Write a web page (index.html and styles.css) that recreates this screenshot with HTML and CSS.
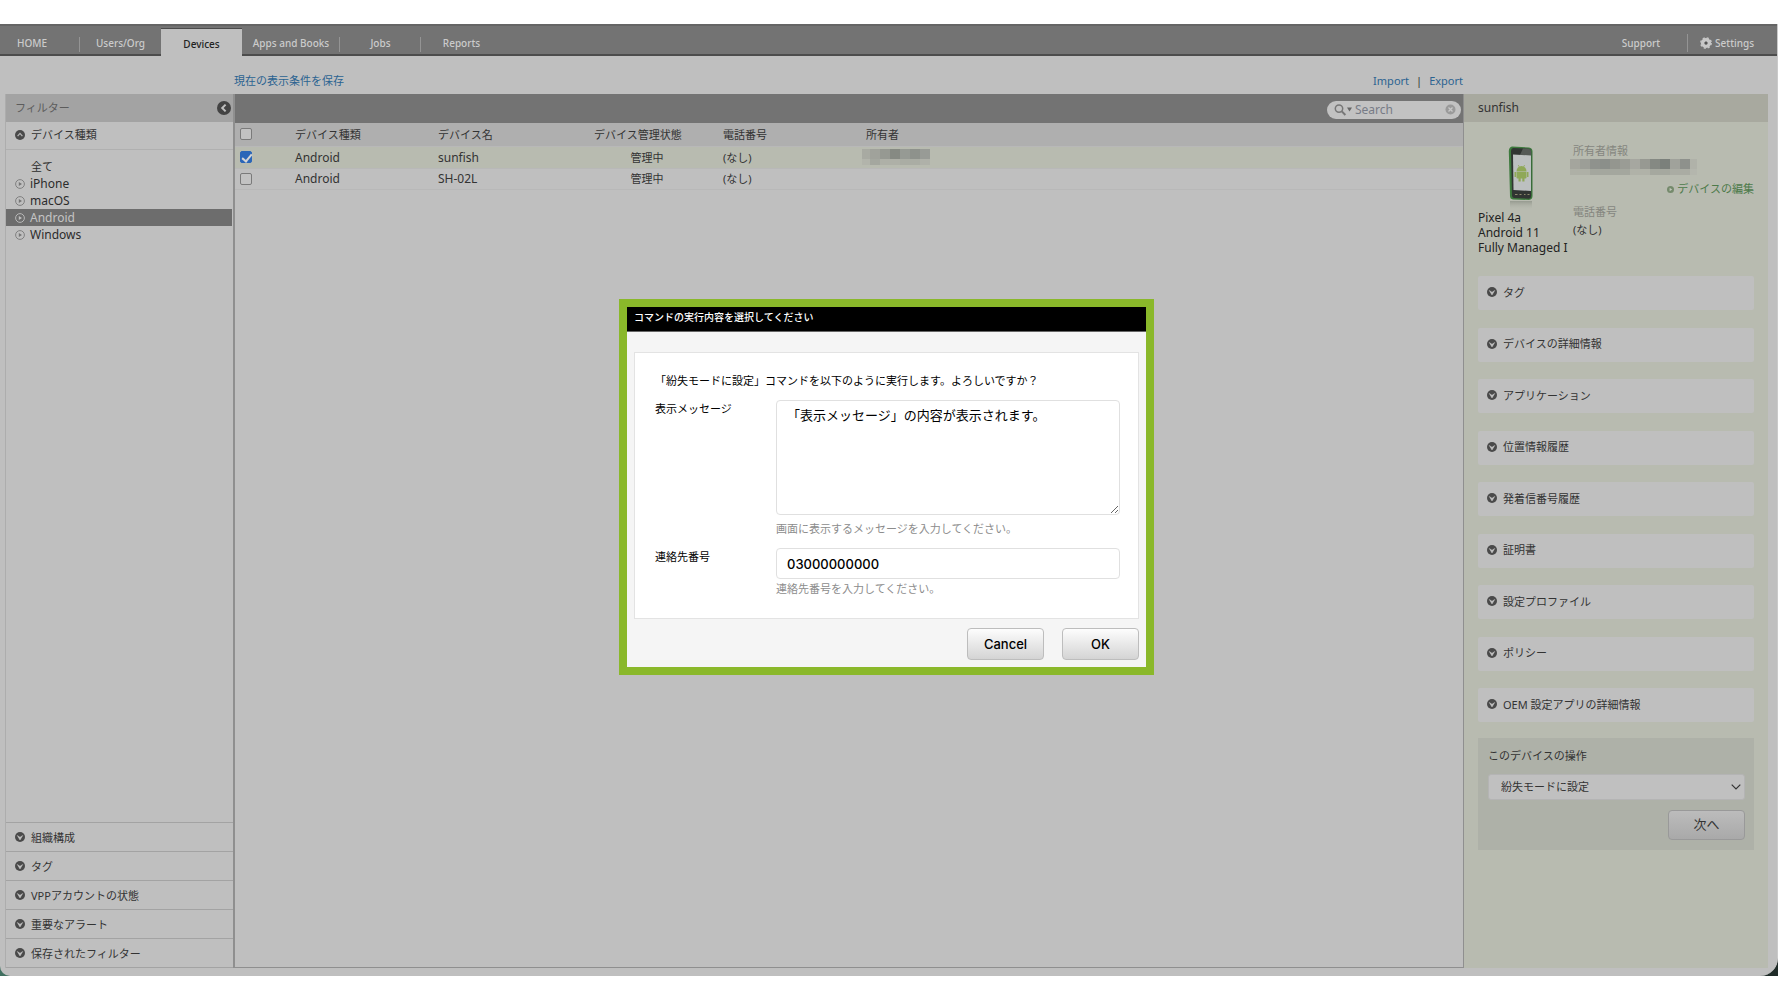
FILE: index.html
```html
<!DOCTYPE html>
<html lang="ja">
<head>
<meta charset="utf-8">
<title>Devices</title>
<link rel="stylesheet" href="styles.css">
</head>
<body>
<svg class="defs" aria-hidden="true">
  <symbol id="down" viewBox="0 0 10 10"><circle cx="5" cy="5" r="5" fill="#4a4a4a"/><path d="M2.300 3.500 5 5.300 7.700 3.500 5 8z" fill="#c4c4c4" stroke="#c4c4c4" stroke-width=".5"/></symbol>
  <symbol id="up" viewBox="0 0 10 10"><circle cx="5" cy="5" r="5" fill="#4a4a4a"/><path d="M2.600 6.200 5 3.400 7.400 6.200" fill="none" stroke="#b4b4b4" stroke-width="1.300"/></symbol>
  <symbol id="left" viewBox="0 0 14 14"><circle cx="7" cy="7" r="7" fill="#434343"/><path d="M8.600 3.600 5.200 7l3.400 3.400" fill="none" stroke="#bfbfbf" stroke-width="2"/></symbol>
  <symbol id="play" viewBox="0 0 10 10"><circle cx="5" cy="5" r="4.400" fill="none" stroke="#808080"/><path d="M3.800 3v4l3.200-2z" fill="#757575"/></symbol>
</svg>
<div class="desktop">
<div class="window">
  <header class="nav">
    <nav class="tabs">
      <a href="#" class="tab tab-home">HOME</a>
      <a href="#" class="tab">Users/Org</a>
      <a href="#" class="tab tab-active">Devices</a>
      <a href="#" class="tab tab-wide">Apps and Books</a>
      <a href="#" class="tab">Jobs</a>
      <a href="#" class="tab">Reports</a>
    </nav>
    <nav class="tools">
      <a href="#">Support</a>
      <a href="#" class="settings">
        <svg width="12" height="12" viewBox="0 0 12 12" aria-hidden="true"><circle cx="6" cy="6" r="3.300" fill="none" stroke="#c8c8c8" stroke-width="3.600"/><circle cx="6" cy="6" r="5.200" fill="none" stroke="#c8c8c8" stroke-width="1.400" stroke-dasharray="2.100 2"/><circle cx="6" cy="6" r="1.500" fill="#555"/></svg>
        Settings</a>
    </nav>
  </header>
  <div class="actions">
    <a href="#">現在の表示条件を保存</a>
    <div class="transfer"><a href="#">Import</a><span>|</span><a href="#">Export</a></div>
  </div>
  <div class="columns">
    <aside class="filters">
      <div class="filters-head"><span>フィルター</span><button type="button" class="collapse" aria-label="閉じる"><svg width="14" height="14"><use href="#left"/></svg></button></div>
      <a href="#" class="group group-open"><svg class="ico"><use href="#up"/></svg>デバイス種類</a>
      <ul class="kinds">
        <li><a href="#" class="kind kind-all">全て</a></li>
        <li><a href="#" class="kind"><svg class="ico"><use href="#play"/></svg>iPhone</a></li>
        <li><a href="#" class="kind"><svg class="ico"><use href="#play"/></svg>macOS</a></li>
        <li><a href="#" class="kind kind-on"><svg class="ico" viewBox="0 0 10 10"><circle cx="5" cy="5" r="4.400" fill="none" stroke="#b8b8b8"/><path d="M3.800 3v4l3.200-2z" fill="#c0c0c0"/></svg>Android</a></li>
        <li><a href="#" class="kind"><svg class="ico"><use href="#play"/></svg>Windows</a></li>
      </ul>
      <div class="groups">
        <a href="#" class="group"><svg class="ico"><use href="#down"/></svg>組織構成</a>
        <a href="#" class="group"><svg class="ico"><use href="#down"/></svg>タグ</a>
        <a href="#" class="group"><svg class="ico"><use href="#down"/></svg>VPPアカウントの状態</a>
        <a href="#" class="group"><svg class="ico"><use href="#down"/></svg>重要なアラート</a>
        <a href="#" class="group"><svg class="ico"><use href="#down"/></svg>保存されたフィルター</a>
      </div>
    </aside>
    <main class="list">
      <div class="list-bar">
        <label class="search">
          <svg width="19" height="12" viewBox="0 0 19 12" aria-hidden="true"><circle cx="5" cy="4.600" r="3.700" fill="none" stroke="#777" stroke-width="1.500"/><path d="m7.800 7.400 3.600 3.600" stroke="#777" stroke-width="2"/><path d="M13 3.400h5L15.500 7.600z" fill="#666"/></svg>
          <input type="text" placeholder="Search" aria-label="Search">
          <svg width="11" height="11" viewBox="0 0 11 11" aria-hidden="true"><circle cx="5.500" cy="5.500" r="5" fill="#9a9a9a"/><path d="m3.500 3.500 4 4m0-4-4 4" stroke="#c8c8c8" stroke-width="1.300"/></svg>
        </label>
      </div>
      <table class="devices">
        <colgroup><col class="c-check"><col class="c-text"><col class="c-text"><col class="c-state"><col class="c-text"><col></colgroup>
        <thead><tr><th><input type="checkbox" class="tick" aria-label="全て選択"></th><th>デバイス種類</th><th>デバイス名</th><th class="state-head">デバイス管理状態</th><th>電話番号</th><th>所有者</th></tr></thead>
        <tbody>
          <tr class="row-on"><td><input type="checkbox" class="tick" checked aria-label="sunfish"></td><td class="latin">Android</td><td class="latin">sunfish</td><td class="state">管理中</td><td>(なし)</td><td><span class="mosaic mosaic-cell"></span></td></tr>
          <tr><td><input type="checkbox" class="tick" aria-label="SH-02L"></td><td class="latin">Android</td><td class="latin">SH-02L</td><td class="state">管理中</td><td>(なし)</td><td></td></tr>
        </tbody>
      </table>
    </main>
    <aside class="detail">
      <h2 class="detail-head">sunfish</h2>
      <div class="detail-body">
        <div class="summary">
          <div class="model">
            <svg class="phone" width="26" height="64" viewBox="0 0 26 64" aria-hidden="true">
              <defs><linearGradient id="fade" x1="0" y1="0" x2="0" y2="1"><stop offset="0" stop-color="#8d9287" stop-opacity=".8"/><stop offset="1" stop-color="#b8bbb0" stop-opacity="0"/></linearGradient></defs>
              <path d="M2 55h22v9H2z" fill="url(#fade)"/>
              <path d="M4 .5 21 1.500q3.500.5 3.500 4V50q0 3.500-3.500 4L5 53.500Q2 53 2 50L.8 5Q1 1 4 .5z" fill="#3d7a3d"/>
              <path d="M5 2 21 2.700q2.200.3 2.200 3V49.500q0 2.800-2.200 3.200L6 52q-2-.3-2-2.500L3 5q0-2.700 2-3z" fill="#303532"/>
              <path d="M15 2.400 21 2.700q2.200.3 2.200 3v4.500L12 9z" fill="#555a56"/>
              <path d="M5 8.500 23 9.500V45L5.500 44z" fill="#bcc0c0"/>
              <path d="M8.500 25.500a5 5.500 0 0 1 10 0z" fill="#8fa858"/><path d="M10.300 19l1.300 2.500m5-2.500-1.300 2.500" stroke="#8fa858" stroke-width=".8"/>
              <path d="M8.500 26h10v5.500q0 1-1 1h-8q-1 0-1-1zM6.500 26h1.500v5H6.500zM19 26h1.500v5H19zM10.500 32h2.200v3.500h-2.200zM14.300 32h2.200v3.500h-2.200z" fill="#8fa858"/>
              <path d="M7 48.500h2.500m2 0h2m2.500 0h1.500m2 0h2" stroke="#8b8a6c" stroke-width="1.200"/>
            </svg>
            <p>Pixel 4a<br>Android 11<br>Fully Managed I</p>
          </div>
          <dl class="owner">
            <dt>所有者情報</dt>
            <dd><span class="mosaic mosaic-owner"></span></dd>
            <dd class="edit"><a href="#"><svg width="7" height="7" viewBox="0 0 7 7" aria-hidden="true"><circle cx="3.500" cy="3.500" r="3.500" fill="#758a6c"/><path d="M2.600 1.700v3.600l2.600-1.800z" fill="#c3c8bb"/></svg>デバイスの編集</a></dd>
            <dt>電話番号</dt>
            <dd class="tel">(なし)</dd>
          </dl>
        </div>
        <div class="sections">
          <button type="button" class="section"><svg class="ico"><use href="#down"/></svg>タグ</button>
          <button type="button" class="section"><svg class="ico"><use href="#down"/></svg>デバイスの詳細情報</button>
          <button type="button" class="section"><svg class="ico"><use href="#down"/></svg>アプリケーション</button>
          <button type="button" class="section"><svg class="ico"><use href="#down"/></svg>位置情報履歴</button>
          <button type="button" class="section"><svg class="ico"><use href="#down"/></svg>発着信番号履歴</button>
          <button type="button" class="section"><svg class="ico"><use href="#down"/></svg>証明書</button>
          <button type="button" class="section"><svg class="ico"><use href="#down"/></svg>設定プロファイル</button>
          <button type="button" class="section"><svg class="ico"><use href="#down"/></svg>ポリシー</button>
          <button type="button" class="section"><svg class="ico"><use href="#down"/></svg>OEM 設定アプリの詳細情報</button>
        </div>
        <form class="operate">
          <label for="operation">このデバイスの操作</label>
          <div class="select">
            <select id="operation"><option>紛失モードに設定</option></select>
            <svg width="10" height="6" viewBox="0 0 10 6" aria-hidden="true"><path d="m.7.7 4.300 4.300L9.300.7" fill="none" stroke="#333" stroke-width="1.200"/></svg>
          </div>
          <button type="button" class="next">次へ</button>
        </form>
      </div>
    </aside>
  </div>
</div>
</div>
<div class="overlay">
  <form class="modal" role="dialog" aria-labelledby="modal-title">
    <h1 class="modal-title" id="modal-title">コマンドの実行内容を選択してください</h1>
    <div class="modal-body">
      <div class="modal-box">
        <p class="modal-lead">「紛失モードに設定」コマンドを以下のように実行します。よろしいですか？</p>
        <div class="field">
          <label for="message">表示メッセージ</label>
          <div class="field-main">
            <textarea id="message">「表示メッセージ」の内容が表示されます。</textarea>
            <p class="help">画面に表示するメッセージを入力してください。</p>
          </div>
        </div>
        <div class="field">
          <label for="contact">連絡先番号</label>
          <div class="field-main">
            <input id="contact" type="text" value="03000000000">
            <p class="help help-near">連絡先番号を入力してください。</p>
          </div>
        </div>
      </div>
      <div class="modal-buttons"><button type="button">Cancel</button><button type="button">OK</button></div>
    </div>
  </form>
</div>
</body>
</html>
```
FILE: styles.css
```css
* { box-sizing: border-box; }
body { margin: 0; background: #fff; color: #333; font: 11px/17px "Noto Sans", "Noto Sans CJK JP", sans-serif; }
h1, h2, p, ul, dl, dd { margin: 0; padding: 0; font-weight: 400; }
ul { list-style: none; }
a { color: inherit; text-decoration: none; }
button, input, select, textarea { font: inherit; color: inherit; margin: 0; }
.defs { position: absolute; width: 0; height: 0; }
.ico { width: 10px; height: 10px; flex: none; }

.desktop { margin: 24px 0; background: linear-gradient(90deg, #3f6f5f, #1f2b28); }
.window { display: flex; flex-direction: column; min-height: calc(100vh - 48px); background: #bfbfbf; border-radius: 0 0 18px 10px; border-right: 1px solid #cacaca; }

.nav { display: flex; justify-content: space-between; height: 32px; background: #737373; border-top: 2px solid #656565; border-bottom: 2px solid #4c4c4c; color: #cbcbcb; font-size: 10px; font-weight: 500; line-height: 18px; }
.tabs { display: flex; }
.tab { position: relative; width: 81px; padding-top: 8px; text-align: center; }
.tab-wide { width: 98px; }
.tab-home { width: 80px; padding-right: 16px; }
.tab-home::after, .tab-wide::after, .tab:nth-child(5)::after { content: ""; position: absolute; right: 0; top: 11px; width: 1px; height: 15px; background: #949494; }
.tab-active { height: 30px; margin-top: 2px; padding-top: 6px; background: #bfbfbf; border-top: 1px solid #4c4c4c; color: #222; }
.tools { display: flex; padding: 8px 23px 0 0; }
.tools a { padding-right: 27px; }
.tools .settings { display: flex; align-items: center; gap: 3px; height: 18px; padding: 0 0 0 12px; border-left: 1px solid #949494; }

.actions { display: flex; justify-content: space-between; align-items: center; height: 38px; padding: 10px 314px 0 234px; color: #2b6391; }
.transfer { display: flex; gap: 7px; }
.transfer span { color: #333; }

.columns { flex: 1; display: flex; padding: 0 9px 8px 5px; }
.filters { display: flex; flex-direction: column; width: 228px; flex: none; border-left: 1px solid #adadad; }
.filters-head { display: flex; align-items: center; justify-content: space-between; height: 28px; padding: 0 2px 2px 9px; background: #a3a3a3; color: #5c5c5c; }
.collapse { display: flex; padding: 2px 0 0; border: 0; background: none; }
.group { display: flex; align-items: center; gap: 6px; padding-left: 9px; height: 29px; border-top: 1px solid #a3a3a3; }
.group-open { height: 28px; padding-bottom: 2px; border-top: 0; border-bottom: 1px solid #b0b0b0; }
.kinds { padding-top: 7px; margin-right: 1px; }
.kind { display: flex; align-items: center; gap: 5px; height: 17px; padding-left: 9px; font-size: 12px; color: #2c2c2c; }
.kind-all { height: 18px; padding-left: 25px; font-size: 11px; }
.kind-on { background: #6d6d6d; color: #c4c4c4; }
.groups { margin-top: auto; border-bottom: 1px solid #a3a3a3; }

.list { flex: 1; min-width: 0; border: solid #8f8f8f; border-width: 0 1px 1px 2px; }
.list-bar { display: flex; justify-content: flex-end; align-items: center; height: 29px; padding: 2px 2px 0 0; background: #737373; }
.search { display: flex; align-items: center; width: 134px; height: 18px; padding: 0 5px 0 7px; border-radius: 9px; background: #c2c2c2; }
.search input { flex: 1; min-width: 0; padding: 0 2px; border: 0; background: none; font-size: 12px; line-height: 16px; outline: 0; }
.search input::placeholder { color: #777b86; }
.devices { width: 100%; border-collapse: collapse; table-layout: fixed; }
.devices th, .devices td { height: 21px; padding: 0 0 0 10px; text-align: left; font-weight: 400; line-height: 17px; border-bottom: 1px solid #b8b8b8; }
.devices thead th { height: 23px; background: #afafaf; }
.devices th:first-child, .devices td:first-child { padding-left: 5px; }
.devices .row-on td { background: #b8bbb0; height: 22px; }
.devices .latin { font-size: 12px; }
.devices .state { text-align: center; }
.devices .state-head { padding-left: 23px; }
.c-check { width: 50px; }
.c-text { width: 143px; }
.c-state { width: 142px; }
.tick { display: block; appearance: none; width: 12px; height: 12px; border: 1px solid #7a7a7a; border-radius: 2px; background: #c2c2c2; }
.tick:checked { border-color: #2b66b8; background: #2b66b8; }
.tick:checked::after { content: ""; display: block; width: 4px; height: 8px; margin: 0 0 0 3px; border: solid #d5d5d5; border-width: 0 2px 2px 0; transform: rotate(40deg); }

.mosaic { display: block; height: 16px; background-repeat: no-repeat; background-position: 0 0, 0 10px; background-size: 100% 10px, 100% 6px; }
.mosaic-cell { width: 68px; margin-left: -4px; background-image:
  linear-gradient(90deg, #a8aaa2 8px, #a0a29b 8px 18px, #969992 18px 28px, #868a83 28px 38px, #969a94 38px 48px, #8e928c 48px 58px, #989b96 58px),
  linear-gradient(90deg, #b2b4ab 8px, #a4a79f 8px 18px, #aeb0a7 18px 38px, #aaada4 38px 58px, #afb1a9 58px); }
.mosaic-owner { width: 127px; margin-left: -3px; background-image:
  linear-gradient(90deg, #a4a59d 10px, #9c9e97 10px 20px, #8f928d 20px 30px, #8b8f8a 30px 40px, #94968f 40px 50px, #9a9c95 50px 60px, #a6a7a0 60px 70px, #979992 70px 80px, #858983 80px 90px, #7b807b 90px 100px, #a0a29b 100px 110px, #8e918c 110px 120px, #b0b2a9 120px),
  linear-gradient(90deg, #aeb0a6 20px, #a4a79e 20px 60px, #b0b2a8 60px 80px, #a5a89f 80px 100px, #aaaca3 100px 120px, #b4b6ad 120px); }

.detail { display: flex; flex-direction: column; width: 304px; flex: none; background: #b8bbb0; }
.detail-head { height: 28px; padding-left: 14px; background: #a8a99f; font-size: 12px; line-height: 28px; }
.detail-body { padding: 0 14px; }
.summary { display: flex; justify-content: space-between; height: 154px; padding-top: 20px; }
.model { width: 91px; font-size: 12px; line-height: 15px; color: #222; white-space: nowrap; }
.phone { display: block; margin: 4px 0 0 30px; }
.owner { width: 181px; }
.owner dt { color: #85867f; }
.owner .edit { margin: 5px 0 6px; color: #4c7a4a; text-align: right; }
.edit svg { margin-right: 3px; }
.owner .tel { margin-top: 1px; }
.sections { display: flex; flex-direction: column; justify-content: space-between; min-height: 446px; }
.section { display: flex; align-items: center; gap: 6px; height: 34px; padding: 0 9px 2px; border: 0; border-radius: 2px; background: #bfbfbf; text-align: left; }
.operate { display: flex; flex-direction: column; margin-top: 16px; padding: 9px 9px 10px 10px; background: #aeb1a8; }
.select { position: relative; margin: 10px 0; }
.select select { display: block; width: 100%; height: 26px; padding: 0 12px 2px; appearance: none; border: 1px solid #b4b4b4; border-radius: 3px; background: #c0c0c0; }
.select svg { position: absolute; right: 4px; top: 10px; }
.next { align-self: flex-end; width: 77px; height: 30px; padding: 0 0 2px; border: 1px solid #999; border-radius: 4px; background: linear-gradient(#bcbcbc, #a9a9a9); font-size: 13px; }

.overlay { position: absolute; inset: 0; padding: 299px 5px 0 0; color: #000; }
.modal { width: 535px; margin: 0 auto; border: 8px solid #8ab82a; background: #f5f5f5; }
.modal-title { height: 25px; padding: 0 7px; border-bottom: 1px solid #666; background: #000; color: #fff; font-size: 10px; font-weight: 500; line-height: 20px; }
.modal-body { padding: 20px 7px 7px; }
.modal-box { height: 267px; padding: 19px 18px 0 20px; border: 1px solid #e3e3e3; background: #fff; }
.modal-lead { margin-bottom: 11px; }
.field { display: flex; }
.field label { width: 121px; flex: none; }
.field-main { flex: 1; }
.field textarea, .field input { display: block; width: 100%; border: 1px solid #e0e0e0; border-radius: 4px; background: #fff; padding: 0 10px; font: 500 13px/20px Inter, sans-serif; }
.field textarea { height: 115px; padding-top: 4px; font: 400 13px/20px "Noto Sans", "Noto Sans CJK JP", sans-serif; }
.field input { height: 31px; }
.help { margin: 5px 0 11px; color: #8c8c8c; }
.help-near { margin-top: 1px; }
.modal-buttons { display: flex; justify-content: flex-end; gap: 18px; margin-top: 9px; }
.modal-buttons button { width: 77px; height: 32px; padding: 0; border: 1px solid #bdbdbd; border-radius: 4px; background: linear-gradient(#fdfdfd, #d4d4d4); font: 500 13px/20px Inter, sans-serif; }
```
